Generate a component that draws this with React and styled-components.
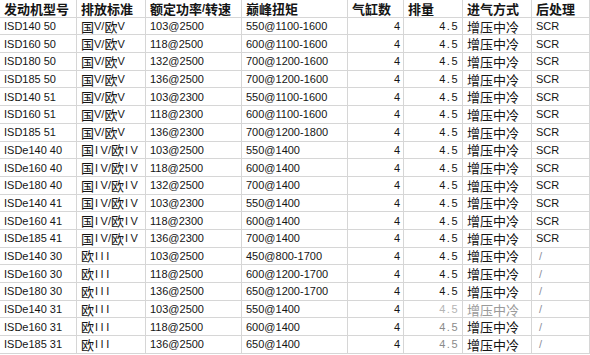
import React from 'react';
import styled, { createGlobalStyle } from 'styled-components';

const GlobalStyle = createGlobalStyle`
  body {
    margin: 0;
    background: #ffffff;
    font-family: "Liberation Sans", "Noto Sans CJK SC", sans-serif;
  }
`;

const columns = ['77px', '69px', '96px', '106px', '56px', '59px', '69px', '1fr'];

const headers = ['发动机型号', '排放标准', '额定功率/转速', '巅峰扭矩', '气缸数', '排量', '进气方式', '后处理'];

// [型号, 排放, 功率, 扭矩, 后处理, 排量颜色]
const rows = [
  ['ISD140 50', '国V/欧V', '103@2500', '550@1100-1600', 'SCR'],
  ['ISD160 50', '国V/欧V', '118@2500', '600@1100-1600', 'SCR'],
  ['ISD180 50', '国V/欧V', '132@2500', '700@1200-1600', 'SCR'],
  ['ISD185 50', '国V/欧V', '136@2500', '700@1200-1600', 'SCR'],
  ['ISD140 51', '国V/欧V', '103@2300', '550@1100-1600', 'SCR'],
  ['ISD160 51', '国V/欧V', '118@2300', '600@1100-1600', 'SCR'],
  ['ISD185 51', '国V/欧V', '136@2300', '700@1200-1800', 'SCR'],
  ['ISDe140 40', '国IV/欧IV', '103@2500', '550@1400', 'SCR'],
  ['ISDe160 40', '国IV/欧IV', '118@2500', '600@1400', 'SCR'],
  ['ISDe180 40', '国IV/欧IV', '132@2500', '700@1400', 'SCR'],
  ['ISDe140 41', '国IV/欧IV', '103@2300', '550@1400', 'SCR'],
  ['ISDe160 41', '国IV/欧IV', '118@2300', '600@1400', 'SCR'],
  ['ISDe185 41', '国IV/欧IV', '136@2300', '700@1400', 'SCR'],
  ['ISDe140 30', '欧III', '103@2500', '450@800-1700', '/'],
  ['ISDe160 30', '欧III', '118@2500', '600@1200-1700', '/'],
  ['ISDe180 30', '欧III', '136@2500', '650@1200-1700', '/'],
  ['ISDe140 31', '欧III', '103@2500', '550@1400', '/', 'faint'],
  ['ISDe160 31', '欧III', '118@2500', '600@1400', '/', 'grey'],
  ['ISDe185 31', '欧III', '136@2500', '650@1400', '/', 'grey'],
];

const tones = { faint: '#b4b4b4', grey: '#8a8a8a' };

const Sheet = styled.div`
  display: grid;
  grid-template-columns: ${columns.join(' ')};
  grid-auto-rows: 17.7px;
  width: 590px;
  background: #fff;
  color: #151515;
`;

const Cell = styled.div`
  box-sizing: border-box;
  border-right: 1px solid #d6d6d6;
  border-bottom: 1px solid #d6d6d6;
  padding: 0 3px 0 4px;
  display: flex;
  align-items: center;
  justify-content: ${p => (p.$right ? 'flex-end' : 'flex-start')};
  font-size: 11px;
  font-weight: ${p => (p.$head ? 700 : 400)};
  letter-spacing: ${p => (p.$spaced ? '1.5px' : '0')};
  color: ${p => p.$tone || 'inherit'};
  white-space: nowrap;
  line-height: 16px;
`;

const Han = styled.span`
  font-family: "Noto Sans CJK SC", sans-serif;
  font-size: 13px;
  line-height: 13px;
  letter-spacing: 0;
`;

const Roman = styled.span`
  letter-spacing: 2.5px;
  padding-left: 1px;
`;

const Slash = styled.span`
  color: #8b8f9c;
  padding-left: 3px;
`;

const mixed = text =>
  text.split(/([\u4e00-\u9fff]+)/).map((part, i) => {
    if (i % 2) return <Han key={i}>{part}</Han>;
    return part.split(/(I+)/).map((bit, j) =>
      j % 2 ? <Roman key={`${i}-${j}`}>{bit}</Roman> : <React.Fragment key={`${i}-${j}`}>{bit}</React.Fragment>
    );
  });

export default function App() {
  return (
    <>
      <GlobalStyle />
      <Sheet>
        {headers.map(h => (
          <Cell key={h} $head>{mixed(h)}</Cell>
        ))}
        {rows.map(([model, std, power, torque, after, tone]) => (
          <React.Fragment key={model}>
            <Cell>{model}</Cell>
            <Cell>{mixed(std)}</Cell>
            <Cell>{power}</Cell>
            <Cell>{torque}</Cell>
            <Cell $right>4</Cell>
            <Cell $right $spaced $tone={tones[tone]}>4.5</Cell>
            <Cell $tone={tone === 'faint' ? '#9a9a9a' : undefined}>{mixed('增压中冷')}</Cell>
            <Cell>{after === '/' ? <Slash>/</Slash> : after}</Cell>
          </React.Fragment>
        ))}
      </Sheet>
    </>
  );
}
